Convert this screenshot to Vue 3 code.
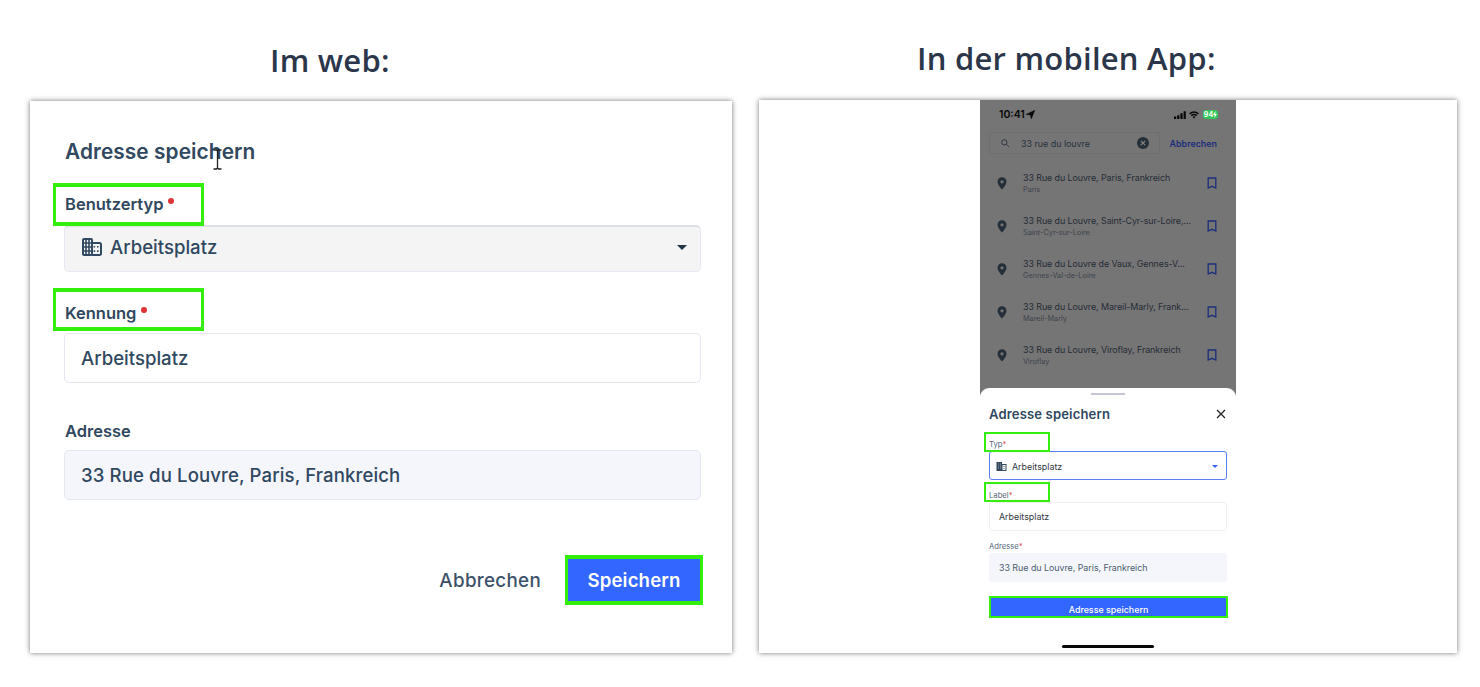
<!-- Side by side view of the "save address" form: web dialog and mobile sheet -->
<template>
  <div class="page">
    <section class="column web">
      <h1>Im web:</h1>
      <div class="card dialog">
        <h2>Adresse speichern</h2>
        <svg class="cursor" viewBox="0 0 9 21" width="9" height="21">
          <path d="M0.5 1h3l1 1 1-1h3M4.5 2v17M0.5 20h3l1-1 1 1h3" fill="none" stroke="#222" stroke-width="1.3" />
        </svg>
        <div class="label">Benutzertyp<i class="dot"></i><span class="mark"></span></div>
        <div class="field select">
          <svg class="building" viewBox="0 0 20 18" width="20" height="18">
            <rect x="1" y="1" width="9" height="16" rx="1" fill="none" stroke="currentColor" stroke-width="2" />
            <path d="M1 5h9M1 9h9M1 13h9M4 1v16M7 1v16" fill="none" stroke="currentColor" stroke-width="1.6" />
            <path d="M10 5h7.5a1.5 1.5 0 0 1 1.5 1.5v9a1.5 1.5 0 0 1-1.5 1.5H10" fill="none" stroke="currentColor" stroke-width="2" />
            <path d="M11.6 8h1.6v1.6h-1.6zM11.6 12.3h1.6v1.6h-1.6zM15 8h1.6v1.6H15zM15 12.3h1.6v1.6H15z" fill="currentColor" />
          </svg>
          <span>Arbeitsplatz</span>
          <i class="caret"></i>
        </div>
        <div class="label second">Kennung<i class="dot"></i><span class="mark"></span></div>
        <div class="field">Arbeitsplatz</div>
        <div class="label third">Adresse</div>
        <div class="field filled address">33 Rue du Louvre, Paris, Frankreich</div>
        <div class="actions">
          <button class="cancel">Abbrechen</button>
          <button class="save">Speichern</button>
        </div>
      </div>
    </section>

    <section class="column mobile">
      <h1>In der mobilen App:</h1>
      <div class="card">
        <div class="phone">
          <div class="status">
            <b>10:41</b>
            <svg class="location" viewBox="0 0 9 9" width="9" height="9"><path d="M8.8.3 5.3 8.8 4.4 4.9.2 4.4z" fill="#080808" stroke="#080808" stroke-width=".5" /></svg>
            <svg class="signal" viewBox="0 0 12 8" width="12" height="8">
              <path d="M0 5.5h2.2V8H0zM3.2 4.2h2.2V8H3.2zM6.4 2.3h2.2V8H6.4zM9.6.3h2.2V8H9.6z" fill="#080808" />
            </svg>
            <svg class="wifi" viewBox="0 0 12 9" width="10" height="8">
              <path d="M.7 3.1Q6-1.3 11.3 3.1M2.7 5.2Q6 2.5 9.3 5.2" fill="none" stroke="#080808" stroke-width="1.7" />
              <path d="M4.2 6.7Q6 5.3 7.8 6.7L6 8.8z" fill="#080808" />
            </svg>
            <span class="battery">94<svg viewBox="0 0 4 7" width="4" height="7"><path d="M2.4 0 0 4h1.7L1.4 7 4 3H2.3z" fill="#fff" /></svg></span>
          </div>
          <div class="search-row">
            <div class="search">
              <svg viewBox="0 0 10 10" width="9" height="9">
                <path d="M6 6l3 3M6.6 3.7a2.9 2.9 0 1 1-5.8 0 2.9 2.9 0 0 1 5.8 0z" fill="none" stroke="#29323d" stroke-width="1" />
              </svg>
              <span>33 rue du louvre</span>
              <svg class="clear" viewBox="0 0 12 12" width="12" height="12">
                <circle cx="6" cy="6" r="6" fill="#252f38" />
                <path d="M3.8 3.8l4.4 4.4M8.2 3.8 3.8 8.2" stroke="#858585" stroke-width="1.2" />
              </svg>
            </div>
            <b class="abort">Abbrechen</b>
          </div>
          <div v-for="item in results" :key="item.city" class="result">
            <svg viewBox="0 0 10 13" width="10" height="13">
              <path d="M5 .3A4.5 4.5 0 0 0 .5 4.8C.5 8 5 12.6 5 12.6S9.5 8 9.5 4.8A4.5 4.5 0 0 0 5 .3zM5 6.4a1.6 1.6 0 1 1 0-3.2 1.6 1.6 0 0 1 0 3.2z" fill="#252f3a" />
            </svg>
            <div class="place">
              <p>{{ item.title }}</p>
              <small>{{ item.city }}</small>
            </div>
            <svg viewBox="0 0 10 12" width="10" height="12">
              <path d="M1.2 1h7.6v10L5 9.3 1.2 11z" fill="none" stroke="#1c2f7c" stroke-width="1.3" />
            </svg>
          </div>

          <div class="sheet">
            <div class="handle"></div>
            <div class="sheet-head">
              <h3>Adresse speichern</h3>
              <svg viewBox="0 0 10 10" width="10" height="10"><path d="M1 1l8 8M9 1 1 9" stroke="#222" stroke-width="1.2" /></svg>
            </div>
            <div class="small-label">Typ<em>*</em><span class="mark"></span></div>
            <div class="small-field active">
              <svg viewBox="0 0 20 18" width="11" height="9">
                <path d="M0 0h11v4h9v14H0z" fill="#34485d" />
                <path d="M12 6h6v10h-6zM3 3h1v2H3zM7 3h1v2H7zM3 7h1v2H3zM7 7h1v2H7zM3 11h1v2H3zM7 11h1v2H7z" fill="#fff" />
                <path d="M14 8h2v2h-2zM14 12h2v2h-2z" fill="#34485d" />
              </svg>
              <span>Arbeitsplatz</span>
              <i class="caret"></i>
            </div>
            <div class="small-label label-two">Label<em>*</em><span class="mark"></span></div>
            <div class="small-field">Arbeitsplatz</div>
            <div class="small-label label-three">Adresse<em>*</em></div>
            <div class="small-field filled">33 Rue du Louvre, Paris, Frankreich</div>
            <button class="submit">Adresse speichern</button>
            <div class="home"></div>
          </div>
        </div>
      </div>
    </section>
  </div>
</template>

<script setup>
import { ref } from 'vue';

const results = ref([
  { title: '33 Rue du Louvre, Paris, Frankreich', city: 'Paris' },
  { title: '33 Rue du Louvre, Saint-Cyr-sur-Loire,...', city: 'Saint-Cyr-sur-Loire' },
  { title: '33 Rue du Louvre de Vaux, Gennes-V...', city: 'Gennes-Val-de-Loire' },
  { title: '33 Rue du Louvre, Mareil-Marly, Frank...', city: 'Mareil-Marly' },
  { title: '33 Rue du Louvre, Viroflay, Frankreich', city: 'Viroflay' },
]);
</script>

<style>
body {
  background: #fff;
}
</style>

<style scoped>
* {
  box-sizing: border-box;
}

.page {
  width: 1480px;
  height: 687px;
  padding-left: 30px;
  display: flex;
  gap: 27px;
  overflow: hidden;
  font-family: Inter, sans-serif;
  color: #304860;
}

.web {
  width: 702px;
  padding-top: 40px;
}

.mobile {
  width: 698px;
  padding-top: 38px;
}

h1,
h2,
h3,
p {
  margin: 0;
}

h1 {
  height: 40px;
  margin-bottom: 21px;
  padding-left: 240px;
  font: 600 31px/40px "Open Sans", sans-serif;
  letter-spacing: 0.24px;
  color: #2b364a;
  white-space: nowrap;
}

.mobile h1 {
  margin-bottom: 22px;
  padding-left: 158px;
}

.card {
  height: 552px;
  background: #fff;
  box-shadow: 0 0 5px rgba(0, 0, 0, 0.55);
}

.mobile .card {
  height: 553px;
}

.dialog {
  position: relative;
  padding: 39px 31px 0 34px;
}

h2 {
  height: 24px;
  margin-bottom: 28px;
  padding-left: 1px;
  font-size: 20.8px;
  line-height: 24px;
  font-weight: 600;
  letter-spacing: 0.1px;
}

.cursor {
  position: absolute;
  left: 183px;
  top: 48px;
}

.label {
  position: relative;
  height: 24px;
  padding-left: 1px;
  margin-bottom: 9px;
  font-size: 16.5px;
  line-height: 24px;
  font-weight: 600;
}

.dot {
  display: inline-block;
  width: 6px;
  height: 6px;
  margin-left: 5px;
  border-radius: 50%;
  background: #df3538;
  vertical-align: 6px;
}

.mark {
  position: absolute;
  left: -11px;
  top: -9px;
  width: 151px;
  height: 43px;
  border: 4px solid #34ef0e;
  border-width: 4px 3px;
}

.second .mark {
  top: -13px;
}

.field {
  height: 50px;
  padding: 0 16px;
  display: flex;
  align-items: center;
  border: 1px solid #e5e7f2;
  border-radius: 5px;
  font-size: 18.6px;
  font-weight: 500;
}

.address {
  letter-spacing: 0.1px;
}

.select {
  height: 47px;
  padding: 0 13px 5px 17px;
  gap: 8px;
  background: #f4f4f4;
  border-top: 2px solid #dddfe9;
}

.caret {
  margin-left: auto;
  border: 5px solid transparent;
  border-top-color: #203444;
  border-bottom: 0;
}

.select .caret {
  margin-top: 2px;
}

.second {
  margin-top: 29px;
  margin-bottom: 8px;
}

.third {
  margin-top: 36px;
  margin-bottom: 7px;
}

.filled {
  background: #f4f6fc;
}

.actions {
  margin-top: 55px;
  margin-right: -2px;
  display: flex;
  justify-content: flex-end;
  align-items: center;
}

button {
  padding: 0;
  border: none;
  background: none;
  font-family: inherit;
  color: #3b5269;
}

.cancel {
  margin-right: 24px;
  font-size: 18.8px;
  font-weight: 500;
  letter-spacing: 0.3px;
}

.save {
  width: 138px;
  height: 50px;
  background: #3366ff;
  border: 4px solid #34ef0e;
  border-width: 4px 3px;
  color: #fff;
  font-size: 18.6px;
  font-weight: 600;
  letter-spacing: 0.15px;
}

.phone {
  width: 256px;
  height: 553px;
  margin-left: 221px;
  background: #757575;
}

.status {
  height: 29px;
  padding: 0 18px 0 19px;
  display: flex;
  align-items: center;
  color: #080808;
}

.status b {
  font-size: 10.5px;
  font-weight: 600;
}

.location {
  margin-left: 1px;
}

.signal {
  margin-left: auto;
}

.wifi {
  margin: 0 4px 0 3px;
}

.battery {
  width: 15px;
  height: 9px;
  display: flex;
  align-items: center;
  justify-content: center;
  border-radius: 3px;
  background: #32c759;
  color: #fff;
  font-size: 7px;
  font-weight: 700;
}

.search-row {
  margin: 3px 19px 9px 9px;
  height: 22px;
  display: flex;
  align-items: center;
  justify-content: space-between;
}

.search {
  width: 171px;
  height: 22px;
  padding: 0 10px 0 11px;
  display: flex;
  align-items: center;
  border: 1px solid #6f6f70;
  border-radius: 2px;
  color: #29323d;
  font-size: 8.9px;
}

.search span {
  margin-left: 11px;
}

.clear {
  margin-left: auto;
}

.abort {
  font-size: 8.9px;
  font-weight: 600;
  color: #1c2f7c;
}

.result {
  height: 43px;
  padding: 0 19px 3px 17px;
  display: flex;
  align-items: center;
  color: #252c36;
}

.place {
  flex: 1;
  padding-left: 16px;
  white-space: nowrap;
}

.place p {
  font-size: 8.9px;
  line-height: 13px;
  letter-spacing: -0.07px;
}

.place small {
  display: block;
  font-size: 7.3px;
  line-height: 11px;
  color: #3e444d;
}

.sheet {
  height: 265px;
  margin-top: 10px;
  padding: 5px 9px 0 9px;
  border-radius: 9px 9px 0 0;
  background: #fff;
}

.handle {
  width: 34px;
  height: 2px;
  margin: 0 auto;
  background: #c4c6d5;
}

.sheet-head {
  height: 20px;
  margin-top: 9px;
  padding-right: 1px;
  display: flex;
  align-items: center;
  justify-content: space-between;
}

h3 {
  font-size: 13.1px;
  font-weight: 600;
  letter-spacing: 0.13px;
}

.small-label {
  position: relative;
  height: 12px;
  margin: 15px 0 0;
  font-size: 7.7px;
  line-height: 12px;
  color: #56677a;
}

.small-label em {
  color: #e5484b;
  font-style: normal;
}

.small-label .mark {
  left: -5px;
  top: -7px;
  width: 66px;
  height: 20px;
  border-width: 2px;
}

.small-label.label-two .mark {
  top: -8px;
}

.small-field {
  height: 29px;
  padding: 0 9px;
  display: flex;
  align-items: center;
  border: 1px solid #f0f1f5;
  border-radius: 3px;
  font-size: 8.9px;
  color: #33383f;
}

.small-field.active {
  padding: 1px 8px 0 6px;
  gap: 5px;
  border-color: #5880f3;
}

.active .caret {
  border-width: 3px 3px 0;
  border-top-color: #3366ff;
}

.small-label.label-two,
.small-label.label-three {
  margin-top: 10px;
}

.small-field.filled {
  border-color: #f4f6fc;
  color: #4c5d70;
  letter-spacing: -0.03px;
}

.submit {
  display: block;
  width: 239px;
  height: 22px;
  margin-top: 14px;
  padding-top: 5px;
  background: #3366ff;
  border: 2px solid #34ef0e;
  color: #fff;
  font-size: 8.9px;
  line-height: 12px;
  font-weight: 500;
}

.home {
  width: 92px;
  height: 3px;
  margin: 27px auto 0;
  border-radius: 2px;
  background: #080808;
}
</style>
